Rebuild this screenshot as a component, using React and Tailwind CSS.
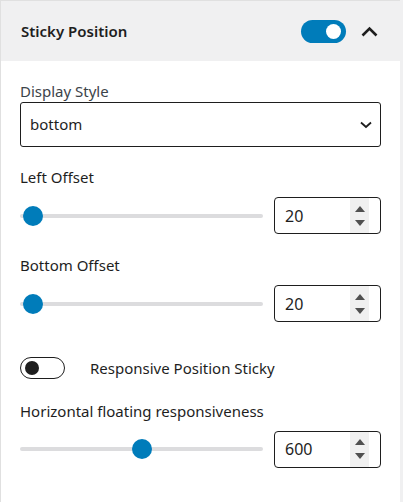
import React, { useState } from 'react';

const font = { fontFamily: '"Noto Sans", "Open Sans", Arial, sans-serif' };

const Toggle = ({ on }) => (
  on ? (
    <div className="w-[45px] h-[23px] rounded-full bg-[#007cba] flex items-center justify-end pr-[5px]">
      <div className="w-[15px] h-[15px] rounded-full bg-white" />
    </div>
  ) : (
    <div className="w-[45px] h-[22px] rounded-full border-[1.5px] border-[#1e1e1e] bg-white flex items-center pl-[4px]">
      <div className="w-[14px] h-[14px] rounded-full bg-[#1e1e1e]" />
    </div>
  )
);

const Range = ({ pos }) => (
  <div className="relative flex-1 h-[20px] flex items-center">
    <div className="w-full h-[4px] rounded-full bg-[#dcdcde]" />
    <div
      className="absolute w-[20px] h-[20px] rounded-full bg-[#007cba]"
      style={{ left: `${pos}px` }}
    />
  </div>
);

const NumberBox = ({ value }) => (
  <div className="w-[107px] h-[37px] rounded-[4px] border border-[#1e1e1e] flex items-stretch overflow-hidden">
    <div className="flex-1 flex items-center pl-[10px] text-[16px] text-[#1e1e1e]">{value}</div>
    <div className="w-[19px] mr-[11px] bg-[#f0f0f0] flex flex-col items-center justify-center gap-[8px]">
      <svg width="10" height="6" viewBox="0 0 10 6"><path d="M5 0L10 6H0Z" fill="#505050" /></svg>
      <svg width="10" height="6" viewBox="0 0 10 6"><path d="M0 0H10L5 6Z" fill="#505050" /></svg>
    </div>
  </div>
);

const SliderRow = ({ label, value, pos }) => (
  <div className="flex flex-col">
    <div className="text-[15px] leading-[20px] text-[#1e1e1e] mb-[10px]">{label}</div>
    <div className="flex items-center gap-[11px]">
      <Range pos={pos} />
      <NumberBox value={value} />
    </div>
  </div>
);

export default function App() {
  const [style] = useState('bottom');
  return (
    <div className="w-[403px] h-[502px] bg-[#f0f0f1] overflow-hidden" style={font}>
      <div className="w-[400px] h-[502px] bg-white border-l border-t border-[#e0e0e0]">
        {/* header */}
        <div className="h-[60px] bg-[#f0f0f1] flex items-center pl-[20px] pr-[22px]">
          <span className="flex-1 text-[15px] font-semibold text-[#1e1e1e]">Sticky Position</span>
          <Toggle on />
          <svg className="ml-[15px]" width="17" height="11" viewBox="0 0 17 11">
            <path d="M1.5 9.5L8.5 2.5L15.5 9.5" fill="none" stroke="#1e1e1e" strokeWidth="2.6" />
          </svg>
        </div>

        <div className="px-[19px] pt-[20px] flex flex-col">
          <div className="text-[15px] leading-[20px] text-[#3c434a]">Display Style</div>
          <div className="mt-[1px] h-[45px] rounded-[3px] border border-[#1e1e1e] flex items-center pl-[9px] pr-[8px]">
            <span className="flex-1 text-[15px] text-[#1e1e1e]">{style}</span>
            <svg width="12" height="8" viewBox="0 0 12 8">
              <path d="M1 1.5L6 6L11 1.5" fill="none" stroke="#1e1e1e" strokeWidth="1.8" />
            </svg>
          </div>

          <div className="mt-[20px]">
            <SliderRow label="Left Offset" value="20" pos={3} />
          </div>
          <div className="mt-[21px]">
            <SliderRow label="Bottom Offset" value="20" pos={3} />
          </div>

          <div className="mt-[35px] flex items-center">
            <Toggle />
            <span className="ml-[25px] text-[15px] text-[#1e1e1e]">Responsive Position Sticky</span>
          </div>

          <div className="mt-[21px]">
            <SliderRow label="Horizontal floating responsiveness" value="600" pos={112} />
          </div>
        </div>
      </div>
    </div>
  );
}
